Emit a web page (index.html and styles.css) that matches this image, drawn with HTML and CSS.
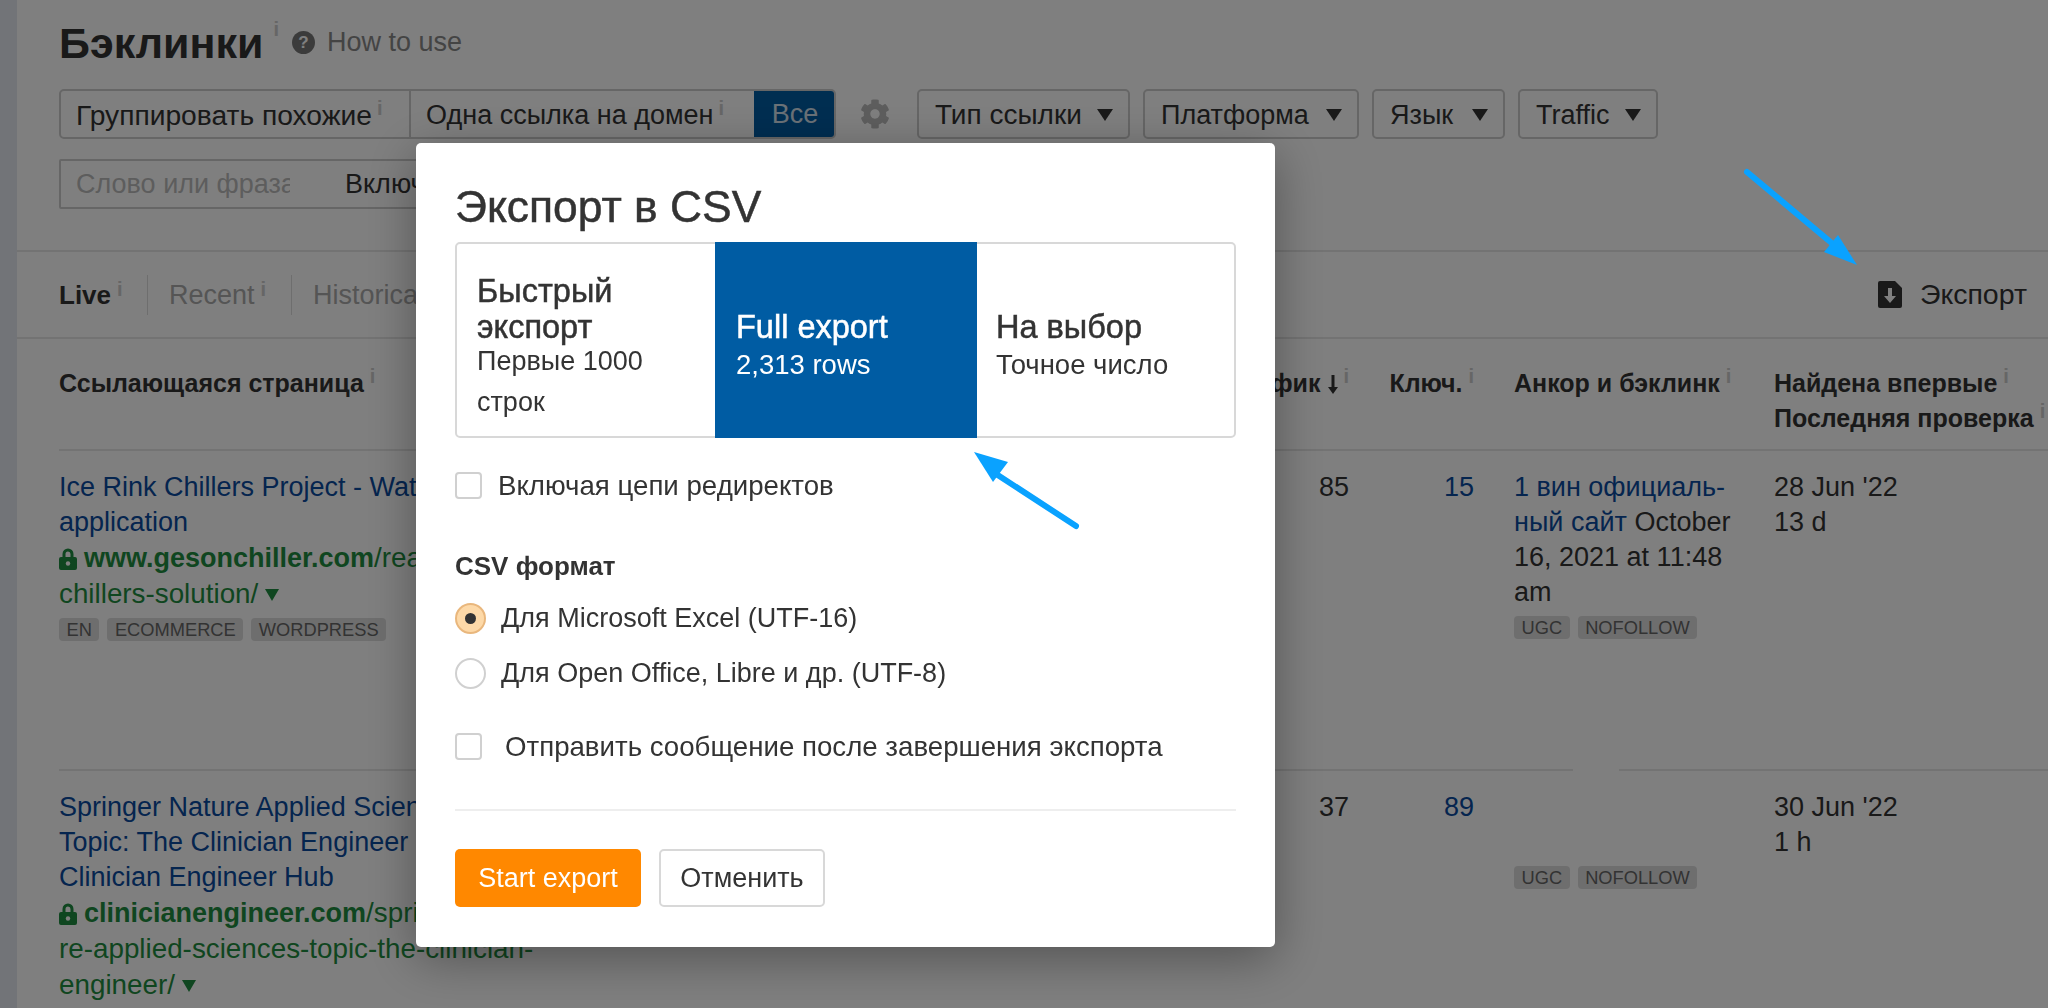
FILE: index.html
```html
<!DOCTYPE html>
<html lang="ru">
<head>
<meta charset="utf-8">
<title>Бэклинки</title>
<link rel="stylesheet" href="styles.css">
</head>
<body>
<div class="shell">
  <aside class="strip"></aside>
  <main class="page">
    <section class="top">
      <header class="title-row">
        <h1 class="title">Бэклинки</h1><sup class="i i-title">i</sup>
        <span class="help">?</span>
        <a class="howto">How to use</a>
      </header>
      <div class="filters">
        <div class="group">
          <span class="seg seg-a">Группировать похожие<sup class="i">i</sup></span>
          <span class="seg seg-b">Одна ссылка на домен<sup class="i">i</sup></span>
          <span class="seg seg-all">Все</span>
        </div>
        <svg class="gear" viewBox="0 0 512 512"><path d="M487.4 315.7l-42.6-24.6c4.3-23.2 4.3-47 0-70.2l42.6-24.6c4.9-2.8 7.1-8.6 5.5-14-11.1-35.6-30-67.8-54.7-94.6-3.8-4.1-10-5.1-14.8-2.3L380.8 110c-17.9-15.4-38.5-27.3-60.8-35.1V25.8c0-5.6-3.9-10.5-9.4-11.7-36.7-8.2-74.3-7.8-109.2 0-5.5 1.2-9.4 6.1-9.4 11.7V75c-22.2 7.9-42.8 19.8-60.8 35.1L88.7 85.5c-4.9-2.8-11-1.9-14.8 2.3-24.7 26.7-43.6 58.9-54.7 94.6-1.7 5.4.6 11.2 5.5 14L67.3 221c-4.3 23.2-4.3 47 0 70.2l-42.6 24.6c-4.9 2.8-7.1 8.6-5.5 14 11.1 35.6 30 67.8 54.7 94.6 3.8 4.1 10 5.1 14.8 2.3l42.6-24.6c17.9 15.4 38.5 27.3 60.8 35.1v49.2c0 5.6 3.9 10.5 9.4 11.7 36.7 8.2 74.3 7.8 109.2 0 5.5-1.2 9.4-6.1 9.4-11.7v-49.2c22.2-7.9 42.8-19.8 60.8-35.1l42.6 24.6c4.9 2.8 11 1.9 14.8-2.3 24.7-26.7 43.6-58.9 54.7-94.6 1.5-5.5-.7-11.3-5.6-14.1zM256 336c-44.1 0-80-35.9-80-80s35.9-80 80-80 80 35.9 80 80-35.9 80-80 80z"/></svg>
        <span class="drop drop-type">Тип ссылки<i class="caret"></i></span>
        <span class="drop drop-platform">Платформа<i class="caret"></i></span>
        <span class="drop drop-lang">Язык<i class="caret"></i></span>
        <span class="drop drop-traffic">Traffic<i class="caret"></i></span>
      </div>
      <div class="search">
        <span class="placeholder">Слово или фраза</span>
        <span class="include">Включая</span>
      </div>
    </section>
    <nav class="tabs">
      <span class="tab tab-live">Live<sup class="i">i</sup></span>
      <span class="tab tab-off tab-recent">Recent<sup class="i">i</sup></span>
      <span class="tab tab-off tab-hist">Historical<sup class="i">i</sup></span>
      <span class="export">
        <svg class="export-icon" viewBox="0 0 24 27"><path class="doc" d="M2 0h15l7 7v18a2 2 0 0 1-2 2H2a2 2 0 0 1-2-2V2a2 2 0 0 1 2-2z"/><path class="doc-arrow" d="M10 7h4v8h4l-6 7-6-7h4z"/></svg>
        Экспорт
      </span>
    </nav>
    <div class="table">
      <div class="row row-head">
        <div class="cell">Ссылающаяся страница<sup class="i">i</sup></div>
        <div class="cell num">Трафик<svg class="sort" viewBox="0 0 10 19"><path d="M3.500 0h3v12H10l-5 7-5-7h3.500z"/></svg><sup class="i">i</sup></div>
        <div class="cell num">Ключ.<sup class="i">i</sup></div>
        <div class="cell">Анкор и бэклинк<sup class="i">i</sup></div>
        <div class="cell nowrap">Найдена впервые<sup class="i">i</sup><br>Последняя проверка<sup class="i">i</sup></div>
      </div>
      <div class="row row-one">
        <div class="cell nowrap">
          <a class="link">Ice Rink Chillers Project - Water cooled chiller<br>application</a><br>
          <span class="url"><svg class="lock" viewBox="0 0 18 22"><path d="M3.500 9V6a5.500 5.500 0 0 1 11 0v3H16a2 2 0 0 1 2 2v9a2 2 0 0 1-2 2H2a2 2 0 0 1-2-2v-9a2 2 0 0 1 2-2zm3 0h5V6a2.500 2.500 0 0 0-5 0z"/><circle class="lock-hole" cx="9" cy="15.500" r="2.200"/></svg><b>www.gesonchiller.com</b>/read/ice-rink-<br>chillers-solution/<i class="caret caret-green"></i></span>
          <div class="tags"><span class="tag">EN</span><span class="tag">ECOMMERCE</span><span class="tag">WORDPRESS</span></div>
        </div>
        <div class="cell num">85</div>
        <div class="cell num"><a class="link">15</a></div>
        <div class="cell">
          <a class="link">1 вин официаль-<br>ный сайт</a> October<br>16, 2021 at 11:48<br>am
          <div class="tags"><span class="tag">UGC</span><span class="tag">NOFOLLOW</span></div>
        </div>
        <div class="cell">28 Jun '22<br>13 d</div>
      </div>
      <div class="row">
        <div class="cell nowrap">
          <a class="link">Springer Nature Applied Sciences<br>Topic: The Clinician Engineer<br>Clinician Engineer Hub</a><br>
          <span class="url"><svg class="lock" viewBox="0 0 18 22"><path d="M3.500 9V6a5.500 5.500 0 0 1 11 0v3H16a2 2 0 0 1 2 2v9a2 2 0 0 1-2 2H2a2 2 0 0 1-2-2v-9a2 2 0 0 1 2-2zm3 0h5V6a2.500 2.500 0 0 0-5 0z"/><circle class="lock-hole" cx="9" cy="15.500" r="2.200"/></svg><b>clinicianengineer.com</b>/springer-natu<br>re-applied-sciences-topic-the-clinician-<br>engineer/<i class="caret caret-green"></i></span>
        </div>
        <div class="cell num">37</div>
        <div class="cell num"><a class="link">89</a></div>
        <div class="cell cell-empty-anchor">
          <div class="tags"><span class="tag">UGC</span><span class="tag">NOFOLLOW</span></div>
        </div>
        <div class="cell">30 Jun '22<br>1 h</div>
      </div>
    </div>
  </main>
</div>

<div class="overlay">
  <div class="modal">
    <h2 class="modal-title">Экспорт в CSV</h2>
    <div class="options">
      <div class="option option-left">
        <strong class="option-name">Быстрый<br>экспорт</strong>
        <span class="option-sub option-sub-tall">Первые 1000<br>строк</span>
      </div>
      <div class="option option-active">
        <strong class="option-name">Full export</strong>
        <span class="option-sub">2,313 rows</span>
      </div>
      <div class="option">
        <strong class="option-name">На выбор</strong>
        <span class="option-sub">Точное число</span>
      </div>
    </div>
    <label class="check check-redirect"><span class="box"></span>Включая цепи редиректов</label>
    <h3 class="format-title">CSV формат</h3>
    <label class="radio"><span class="dot dot-on"></span>Для Microsoft Excel (UTF-16)</label>
    <label class="radio"><span class="dot"></span>Для Open Office, Libre и др. (UTF-8)</label>
    <label class="check check-notify"><span class="box"></span>Отправить сообщение после завершения экспорта</label>
    <hr class="rule">
    <div class="actions">
      <button class="btn btn-primary">Start export</button>
      <button class="btn btn-cancel">Отменить</button>
    </div>
  </div>
</div>

<svg class="arrows" viewBox="0 0 2048 1008">
  <line x1="1747" y1="172" x2="1840" y2="250"/>
  <polygon points="1857,265 1838,235 1824,252"/>
  <line x1="1076" y1="526" x2="990" y2="470"/>
  <polygon points="974,452 1008,462 993,482"/>
</svg>
</body>
</html>
```

FILE: styles.css
```css
* { box-sizing: border-box; }
html, body { margin: 0; height: 100%; }
body {
  width: 2048px;
  height: 1008px;
  overflow: hidden;
  background: #fff;
  color: #333;
  font-family: "Liberation Sans", Arial, sans-serif;
  font-size: 27px;
  line-height: 35px;
}
.shell { display: flex; height: 1008px; overflow: hidden; }
.strip { flex: 0 0 17px; background: #e4e9f0; }
.page { flex: 1; min-width: 0; }

.i {
  font-size: 20px;
  font-weight: 700;
  line-height: 0;
  color: #ccc;
  vertical-align: 9px;
  margin-left: 6px;
}

.top { height: 252px; padding: 0 0 0 42px; border-bottom: 2px solid #e6e6e6; }
.title-row { display: flex; align-items: center; height: 89px; padding-bottom: 4px; }
.title { margin: 0; font-size: 43px; line-height: 44px; font-weight: 700; color: #333; }
.i-title { margin: -28px 0 0 10px; line-height: 1; }
.help {
  width: 23px; height: 23px; margin-left: 13px;
  border-radius: 50%;
  background: #777; color: #fff;
  font-size: 17px; line-height: 23px; font-weight: 700; text-align: center;
}
.howto { margin-left: 12px; color: #888; }

.filters { display: flex; align-items: center; height: 50px; }
.group {
  display: flex; width: 777px; height: 50px;
  border: 2px solid #ccc; border-radius: 5px; overflow: hidden;
}
.seg { display: flex; align-items: center; white-space: nowrap; padding: 2px 0 0 15px; line-height: 1; }
.seg .i { align-self: flex-start; margin: 5px 0 0 5px; line-height: 1; }
.seg-a { width: 351px; border-right: 2px solid #ccc; font-size: 28.200px; }
.seg-b { width: 344px; }
.seg-all { width: 82px; margin: -2px -2px -2px auto; padding: 0; justify-content: center; background: #005ca3; color: #d5e2ee; }
.gear { width: 30px; height: 30px; margin: 0 27px 0 24px; fill: #bbb; flex: none; }
.drop {
  display: flex; align-items: center; justify-content: space-between;
  height: 50px; margin-right: 13px; padding: 2px 15px 0 16px;
  border: 2px solid #ccc; border-radius: 5px; white-space: nowrap; line-height: 1;
}
.drop-type { width: 213px; font-size: 28px; }
.drop-platform { width: 216px; }
.drop-lang { width: 133px; }
.drop-traffic { width: 140px; }
.caret {
  display: inline-block; width: 0; height: 0;
  border-left: 8px solid transparent; border-right: 8px solid transparent;
  border-top: 12px solid #333;
}
.caret-green { border-top-color: #1f8c40; border-left-width: 7.500px; border-right-width: 7.500px; margin-left: 7px; vertical-align: 2px; }

.search {
  display: flex; align-items: center; width: 900px; height: 50px; margin-top: 20px;
  border: 2px solid #ccc; border-radius: 2px; line-height: 1;
}
.placeholder { width: 214px; margin-left: 15px; overflow: hidden; white-space: nowrap; color: #bbb; }
.include { margin-left: 55px; }

.tabs { display: flex; align-items: center; height: 87px; padding-left: 42px; border-bottom: 2px solid #e6e6e6; }
.tab { display: flex; align-items: flex-start; height: 40px; line-height: 40px; white-space: nowrap; }
.tab .i { line-height: 28px; vertical-align: top; }
.tab-live { width: 89px; font-weight: 700; font-size: 26px; border-right: 1px solid #ddd; }
.tab-off { color: #aaa; }
.tab-recent { width: 144px; padding-left: 21px; border-right: 1px solid #ddd; }
.tab-hist { padding-left: 21px; }
.export { display: flex; align-items: center; margin-left: auto; padding-right: 21px; white-space: nowrap; font-size: 28.500px; }
.export-icon { width: 24px; height: 27px; margin-right: 18px; }
.doc { fill: #333; }
.doc-arrow { fill: #fff; }

.table { padding-left: 42px; }
.row {
  display: grid;
  grid-template-columns: 1159px 131px 125px 300px 1fr;
  height: 319px;
  padding-top: 19px;
  border-bottom: 2px solid #e6e6e6;
}
.row-head { height: 112px; padding-top: 27px; font-weight: 700; font-size: 25px; }
.row-one { height: 320px; position: relative; }
.row-one::after {
  content: "";
  position: absolute; left: 1514px; bottom: -2px;
  width: 46px; height: 2px;
  background: #fff;
}
.sort { width: 10px; height: 19px; margin-left: 8px; fill: #333; vertical-align: -2px; }
.row-head .num .sort + .i { margin-left: 5px; }
.cell:nth-child(4) { padding-left: 40px; }
.num { text-align: right; white-space: nowrap; }
.nowrap { white-space: nowrap; }
.link { color: #0a4a9e; }
.url { color: #1f8c40; font-size: 27.800px; }
.url b { font-weight: 700; font-size: 27px; }
.lock { width: 18px; height: 22px; margin-right: 7px; fill: #1f8c40; vertical-align: -3px; }
.lock-hole { fill: #fff; }
.tags { display: flex; gap: 8px; height: 23px; margin-top: 6px; }
.tag {
  height: 23px; padding: 0 7.500px; border-radius: 4px;
  background: #ddd; color: #666;
  font-size: 18.300px; line-height: 23px;
}
.cell-empty-anchor { padding-top: 70px; }

.overlay {
  position: fixed; inset: 0;
  padding: 143px 0 0 416px;
  background: rgba(0, 0, 0, .5);
}
.modal {
  width: 859px; height: 804px;
  padding: 37px 39px 0;
  background: #fff;
  border-radius: 5px;
  box-shadow: 0 12px 50px rgba(0, 0, 0, .35);
  color: #333;
}
.modal-title { margin: 0; font-size: 44.400px; line-height: 54px; font-weight: 400; color: #333; -webkit-text-stroke: .5px #333; }
.options {
  display: grid; grid-template-columns: 258px 262px 1fr;
  height: 196px; width: 781px; margin-top: 8px;
  border: 2px solid #d8d8d8; border-radius: 5px;
}
.option { display: flex; flex-direction: column; justify-content: center; padding: 0 20px; }
.option-left { padding-top: 15px; }
.option-active { margin: -2px 0; padding: 12px 0 0 21px; background: #005ca3; color: #fff; }
.option:last-child { padding-top: 12px; padding-left: 19px; }
.option-name { font-size: 32.500px; line-height: 36px; font-weight: 400; -webkit-text-stroke: .5px currentColor; }
.option-sub { margin-top: 2px; line-height: 36px; font-size: 27.500px; }
.option-sub-tall { line-height: 41px; margin-top: -4px; font-size: 27px; }
.check, .radio { display: flex; align-items: center; white-space: nowrap; }
.check { font-size: 27.650px; }
.box { flex: none; width: 27px; height: 27px; border: 2px solid #d0d0d0; border-radius: 4px; }
.check-redirect { height: 28px; margin-top: 33px; }
.check-redirect .box { margin-right: 16px; }
.format-title { margin: 51px 0 0; font-size: 26px; line-height: 32px; font-weight: 700; }
.radio { height: 31px; margin-top: 24px; }
.format-title + .radio { margin-top: 21px; }
.dot {
  flex: none; display: flex; width: 31px; height: 31px; margin-right: 15px;
  border: 2px solid #d0d0d0; border-radius: 50%;
}
.dot-on { background: #fdd9a8; border-color: #e9b77d; align-items: center; justify-content: center; }
.dot-on::after { content: ""; width: 11px; height: 11px; border-radius: 50%; background: #333; }
.check-notify { height: 28px; margin-top: 43px; }
.check-notify .box { margin-right: 23px; }
.rule { height: 2px; margin: 49px 0 0; border: 0; background: #eee; }
.actions { display: flex; gap: 18px; margin-top: 38px; }
.btn { height: 58px; font: inherit; border-radius: 5px; cursor: pointer; padding: 0; }
.btn-primary { width: 186px; border: 0; background: #ff8800; color: #fff; }
.btn-cancel { width: 166px; border: 2px solid #d8d8d8; background: #fff; color: #333; }

.arrows { position: fixed; left: 0; top: 0; width: 2048px; height: 1008px; pointer-events: none; }
.arrows line { stroke: #0aa2ff; stroke-width: 6; stroke-linecap: round; }
.arrows polygon { fill: #0aa2ff; }
```
